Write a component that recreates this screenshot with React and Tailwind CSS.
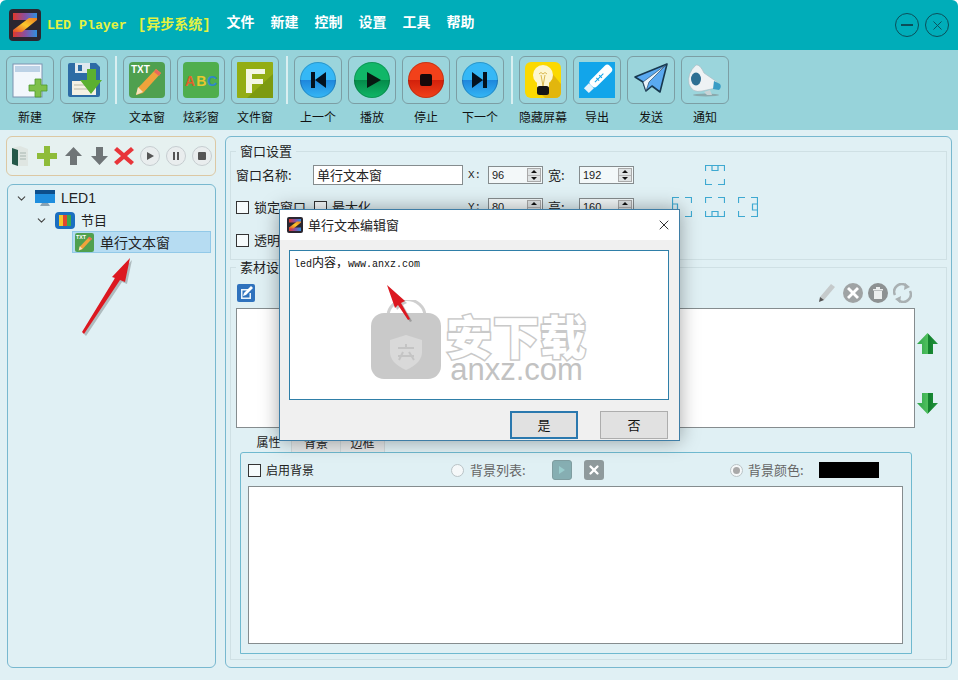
import { X, ChevronDown } from "lucide-react";

const cjk = "font-['Noto_Sans_CJK_SC','Liberation_Sans',sans-serif]";

function Logo({ size }) {
    return (
        <svg width={size} height={size} viewBox="0 0 32 32">
            <defs>
                <linearGradient id={`logoBar${size}`} x1="0" y1="0" x2="1" y2="0">
                    <stop offset="0" stopColor="#e2382a" />
                    <stop offset="0.5" stopColor="#8a4fa0" />
                    <stop offset="1" stopColor="#2f8fe0" />
                </linearGradient>
                <linearGradient id={`logoMid${size}`} x1="0" y1="1" x2="1" y2="0">
                    <stop offset="0" stopColor="#e8452a" />
                    <stop offset="0.5" stopColor="#f8c92c" />
                    <stop offset="1" stopColor="#ee7a22" />
                </linearGradient>
            </defs>
            <rect width="32" height="32" rx="4" fill="#2b2630" />
            <path d="M4 4h24v7H4z" fill={`url(#logoBar${size})`} />
            <path d="M4 21h24v7H4z" fill={`url(#logoBar${size})`} />
            <path d="M20 9h8v2L13 23H4v-2z" fill={`url(#logoMid${size})`} />
        </svg>
    );
}

function NewIcon() {
    return (
        <svg width="36" height="36" viewBox="0 0 36 36">
            <rect x="1" y="2" width="29" height="33" fill="#f2f7fc" stroke="#7c94b0" />
            <rect x="3" y="4" width="25" height="6" fill="#bcd2e6" />
            <path d="M24 18h6v6h6v6h-6v6h-6v-6h-6v-6h6z" fill="#7fc04a" stroke="#4d9a2f" strokeWidth="0.8" transform="translate(-1 -1)" />
        </svg>
    );
}

function SaveIcon() {
    return (
        <svg width="36" height="36" viewBox="0 0 36 36">
            <path d="M2 3q0-2 2-2h26l4 4v28q0 2-2 2H4q-2 0-2-2z" fill="#2d6ca5" />
            <rect x="9" y="1" width="15" height="10" fill="#dfe8ee" />
            <rect x="12" y="3" width="4" height="6" fill="#2d6ca5" />
            <rect x="6" y="19" width="24" height="14" fill="#f4f1e4" />
            <path d="M8 23h16M8 27h16" stroke="#b9b9a8" />
            <path d="M21 7h9v11h6L25 32 14 18h7z" fill="#5bb030" />
        </svg>
    );
}

function TxtIcon({ size = 36 }) {
    return (
        <svg width={size} height={size} viewBox="0 0 36 36">
            <rect width="36" height="36" rx="4" fill="#4fa04f" />
            <text x="2" y="11" fontSize="10" fontWeight="700" fill="#fff" fontFamily="Liberation Sans">TXT</text>
            <path d="M27 7l5 4-18 20-7 2 2-7z" fill="#f0a33c" />
            <path d="M27 7l5 4-2 3-5-4z" fill="#e96a5a" />
            <path d="M9 25l5 5-7 3z" fill="#f7e2bd" />
        </svg>
    );
}

function AbcIcon() {
    return (
        <svg width="36" height="36" viewBox="0 0 36 36">
            <rect width="36" height="36" rx="4" fill="#4fae4d" />
            <text x="2" y="24" fontSize="14" fontWeight="700" letterSpacing="1" fontFamily="Liberation Sans">
                <tspan fill="#e2622a">A</tspan>
                <tspan fill="#e8c72e">B</tspan>
                <tspan fill="#2f86c9">C</tspan>
            </text>
        </svg>
    );
}

function FileIcon() {
    return (
        <svg width="36" height="36" viewBox="0 0 36 36">
            <rect width="36" height="36" rx="1" fill="#93ad14" />
            <path d="M36 12v24H10z" fill="#7d9a10" />
            <path d="M9 7h19v5H15v5h11v5H15v9H9z" fill="#f4f6e4" />
        </svg>
    );
}

function RoundIcon({ id, light, dark, children }) {
    return (
        <svg width="36" height="36" viewBox="0 0 36 36">
            <defs>
                <linearGradient id={id} x1="0" y1="0" x2="0" y2="1">
                    <stop offset="0" stopColor={light} />
                    <stop offset="0.5" stopColor={light} />
                    <stop offset="0.5" stopColor={dark} />
                    <stop offset="1" stopColor={light} />
                </linearGradient>
            </defs>
            <circle cx="18" cy="18" r="18" fill={`url(#${id})`} />
            <circle cx="18" cy="18" r="17.5" fill="none" stroke="#000" strokeOpacity="0.18" />
            {children}
        </svg>
    );
}

function BulbIcon() {
    return (
        <svg width="36" height="36" viewBox="0 0 36 36">
            <rect width="36" height="36" rx="6" fill="#fbd900" />
            <path d="M26 10L36 22v8q0 6-6 6H20L14 30z" fill="#e2b60d" />
            <circle cx="18" cy="13" r="10" fill="#fdf6d0" />
            <rect x="12" y="18" width="12" height="7" fill="#fdf6d0" />
            <path d="M14 12q2-3 4 0q2-3 4 0M16 13l2 11M20 13l-2 11" stroke="#d9b850" fill="none" />
            <rect x="12" y="24" width="12" height="9" rx="2.5" fill="#151515" />
        </svg>
    );
}

function UsbIcon() {
    return (
        <svg width="36" height="36" viewBox="0 0 36 36">
            <rect width="36" height="36" fill="#12a5ea" />
            <g transform="rotate(45 18 18)">
                <rect x="13.5" y="-1" width="9" height="27" rx="3.5" fill="#fff" />
                <rect x="14.5" y="26" width="7" height="7" fill="#e4f3fb" />
                <path d="M18 9v12M16 13h4M16 17h4" stroke="#12a5ea" />
            </g>
        </svg>
    );
}

function SendIcon() {
    return (
        <svg width="36" height="36" viewBox="0 0 36 36">
            <path d="M34 2L2 15l8 5 3 9 6-5 8 6z" fill="#5aa9f0" stroke="#17384f" strokeWidth="1.6" strokeLinejoin="round" />
            <path d="M34 2L10 20l3 9 3-9z" fill="#eaf4fc" stroke="#17384f" strokeWidth="0.6" />
        </svg>
    );
}

function NoticeIcon() {
    return (
        <svg width="36" height="36" viewBox="0 0 36 36">
            <ellipse cx="19" cy="33" rx="13" ry="1.5" fill="#8aa9ad" />
            <path d="M9 3q4-1 8 8l13 9-1 6-14 3Q5 31 2 22 0 11 9 3z" fill="#eef2f4" stroke="#aab7bd" strokeWidth="0.6" />
            <ellipse cx="9" cy="17" rx="5" ry="6.5" fill="#2e6f93" />
            <path d="M27 19l6 3q2 3-1 6l-6-1z" fill="#3a9cc5" />
            <path d="M17 30l3 3h5l-2-5z" fill="#c9d3d6" />
        </svg>
    );
}

const playGlyph = <path d="M13 10l14 8-14 8z" fill="#071a12" />;

const tools = [
    { label: "新建", icon: <NewIcon /> },
    { label: "保存", icon: <SaveIcon /> },
    "sep",
    { label: "文本窗", icon: <TxtIcon /> },
    { label: "炫彩窗", icon: <AbcIcon /> },
    { label: "文件窗", icon: <FileIcon /> },
    "sep",
    {
        label: "上一个",
        icon: (
            <RoundIcon id="roundPrev" light="#35b8f6" dark="#1e86dc">
                <path d="M11 10h4v16h-4zM26 10v16l-11-8z" fill="#04121f" />
            </RoundIcon>
        ),
    },
    {
        label: "播放",
        icon: (
            <RoundIcon id="roundPlay" light="#10b768" dark="#048a4a">
                {playGlyph}
            </RoundIcon>
        ),
    },
    {
        label: "停止",
        icon: (
            <RoundIcon id="roundStop" light="#f2411a" dark="#d2200b">
                <rect x="12" y="12" width="12" height="12" rx="2" fill="#16090a" />
            </RoundIcon>
        ),
    },
    {
        label: "下一个",
        icon: (
            <RoundIcon id="roundNext" light="#35b8f6" dark="#1e86dc">
                <path d="M10 10v16l11-8zM21 10h4v16h-4z" fill="#04121f" />
            </RoundIcon>
        ),
    },
    "sep",
    { label: "隐藏屏幕", icon: <BulbIcon /> },
    { label: "导出", icon: <UsbIcon /> },
    { label: "发送", icon: <SendIcon /> },
    { label: "通知", icon: <NoticeIcon /> },
];

function ToolButton({ label, icon }) {
    return (
        <div className="flex w-[48px] flex-col items-center">
            <div className="flex h-[48px] w-[48px] items-center justify-center rounded-[6px] border border-[#7c9ea4] bg-[#9bd5dc]">
                {icon}
            </div>
            <div className="mt-[4px] h-[18px] whitespace-nowrap text-[12px] leading-[18px] text-[#111]">{label}</div>
        </div>
    );
}

function TreeIconMonitor() {
    return (
        <svg width="20" height="17" viewBox="0 0 20 17">
            <rect x="0" y="0" width="20" height="13" fill="#1f8ede" />
            <rect x="0" y="0" width="20" height="4" fill="#0d4f8c" />
            <path d="M7 13h6l2 3H5z" fill="#8aa3b3" />
        </svg>
    );
}

function TreeIconProgram() {
    return (
        <svg width="20" height="17" viewBox="0 0 20 17">
            <rect width="20" height="17" rx="4" fill="#1b6fc0" />
            <rect x="4" y="3" width="4" height="11" fill="#f4c62c" />
            <rect x="8" y="3" width="4" height="11" fill="#e2462e" />
            <rect x="12" y="3" width="4" height="11" fill="#3aaa4d" />
        </svg>
    );
}

function SmallRound({ children }) {
    return (
        <svg width="20" height="20" viewBox="0 0 20 20">
            <circle cx="10" cy="10" r="9.5" fill="#e9edee" stroke="#c6cdd0" />
            {children}
        </svg>
    );
}

function SideToolbar() {
    return (
        <div className="flex h-[40px] items-center rounded-[6px] border border-[#dcc8a4] bg-[#e6f1f0] pl-[5px]">
            <svg width="16" height="20" viewBox="0 0 16 20" className="mr-[9px]">
                <path d="M0 2l8-2 8 3v17H5l-5-2z" fill="#dfe6e2" />
                <path d="M0 2l6 2v16l-6-2z" fill="#25594a" />
                <path d="M8 7h6M8 10h6M8 13h6" stroke="#a7b6b0" />
            </svg>
            <svg width="20" height="20" viewBox="0 0 20 20" className="mr-[8px]">
                <path d="M7 0h6v7h7v6h-7v7H7v-7H0V7h7z" fill="#8ebc3a" />
            </svg>
            <svg width="17" height="18" viewBox="0 0 17 18" className="mr-[9px]">
                <path d="M8.5 0L17 9h-5v9H5V9H0z" fill="#6f7577" />
            </svg>
            <svg width="17" height="18" viewBox="0 0 17 18" className="mr-[6px]">
                <path d="M8.5 18L17 9h-5V0H5v9H0z" fill="#6f7577" />
            </svg>
            <svg width="20" height="20" viewBox="0 0 20 20" className="mr-[6px]">
                <path d="M3 1l7 6 7-6 3 3-7 6 7 6-3 3-7-6-7 6-3-3 7-6-7-6z" fill="#e8353a" />
            </svg>
            <div className="mr-[6px]">
                <SmallRound>
                    <path d="M7 6l7 4-7 4z" fill="#555" />
                </SmallRound>
            </div>
            <div className="mr-[6px]">
                <SmallRound>
                    <path d="M7 6h2v8H7zM11 6h2v8h-2z" fill="#555" />
                </SmallRound>
            </div>
            <SmallRound>
                <rect x="6" y="6" width="8" height="8" rx="1" fill="#555" />
            </SmallRound>
        </div>
    );
}

function Tree() {
    return (
        <div className="mt-[8px] ml-[1px] flex-1 rounded-[6px] border border-[#78b8cf] bg-[#e0f0f4] pt-[2px] text-[#222]">
            <div className="flex h-[22px] items-center pl-[7px]">
                <ChevronDown size={13} strokeWidth={2} className="text-[#444]" />
                <div className="ml-[7px]">
                    <TreeIconMonitor />
                </div>
                <span className="ml-[6px] text-[14px] font-['Liberation_Sans',sans-serif]">LED1</span>
            </div>
            <div className="flex h-[22px] items-center pl-[27px]">
                <ChevronDown size={13} strokeWidth={2} className="text-[#444]" />
                <div className="ml-[7px]">
                    <TreeIconProgram />
                </div>
                <span className="ml-[6px] text-[13px]">节目</span>
            </div>
            <div className="ml-[64px] mr-[4px] flex h-[22px] items-center border border-[#92c9e8] bg-[#b6dcf2] pl-[2px]">
                <TxtIcon size={19} />
                <span className="ml-[6px] text-[14px]">单行文本窗</span>
            </div>
        </div>
    );
}

function Spin({ value }) {
    return (
        <div className="flex h-[18px] w-[55px] items-center justify-between border border-[#858c8e] bg-[#f3f8f9] pl-[3px] pr-[1px]">
            <span className="text-[11px] leading-none text-[#222] font-['Liberation_Sans',sans-serif]">{value}</span>
            <div className="flex h-[14px] w-[14px] flex-col border border-[#a9a9a9] bg-[#dfe3e4]">
                <div className="flex flex-1 items-center justify-center border-b border-[#b5b5b5]">
                    <div className="h-0 w-0 border-x-[3px] border-b-[3px] border-x-transparent border-b-[#111]" />
                </div>
                <div className="flex flex-1 items-center justify-center">
                    <div className="h-0 w-0 border-x-[3px] border-t-[3px] border-x-transparent border-t-[#111]" />
                </div>
            </div>
        </div>
    );
}

function Check({ label, className = "", textClass = "text-[13px]" }) {
    return (
        <div className={`flex items-center ${className}`}>
            <div className="h-[13px] w-[13px] border border-[#333] bg-[#f6fbfc]" />
            <span className={`ml-[5px] whitespace-nowrap text-[#222] ${textClass}`}>{label}</span>
        </div>
    );
}

function AlignIcon({ block }) {
    return (
        <svg width="20" height="20" viewBox="0 0 20 20" fill="none" stroke="#3ea9d1" strokeWidth="1.2">
            <path d="M0.5 6V0.5H7M13 0.5H19.5V6M19.5 14V19.5H13M7 19.5H0.5V14" />
            {block === "top" && <path d="M7 0.5V5.5H13V0.5M7 0.5H13" />}
            {block === "bottom" && <path d="M7 19.5V14.5H13V19.5M7 19.5H13" />}
            {block === "left" && <path d="M0.5 7H5.5V13H0.5M0.5 6V14" />}
            {block === "right" && <path d="M19.5 7H14.5V13H19.5M19.5 6V14" />}
        </svg>
    );
}

function Legend({ children }) {
    return <legend className="ml-[5px] h-[16px] px-[4px] text-[13px] leading-[16px] text-[#222]">{children}</legend>;
}

function WindowSettings() {
    return (
        <fieldset className="h-[117px] border border-[#cfe0e4]">
            <Legend>窗口设置</Legend>
            <div className="mt-[6px] flex h-[20px] items-center pl-[5px]">
                <span className="w-[77px] text-[13px] text-[#222]">窗口名称:</span>
                <div className="flex h-[20px] w-[150px] items-center border border-[#858c8e] bg-white pl-[3px] text-[13px] text-[#222]">
                    单行文本窗
                </div>
                <span className="ml-[5px] w-[20px] text-[11px] text-[#222] font-['Liberation_Mono',monospace]">X:</span>
                <Spin value="96" />
                <span className="ml-[5px] w-[31px] text-[13px] text-[#222]">宽:</span>
                <Spin value="192" />
                <div className="ml-[71px]">
                    <AlignIcon block="top" />
                </div>
            </div>
            <div className="mt-[12px] flex h-[20px] items-center pl-[5px]">
                <Check label="锁定窗口" className="w-[78px]" />
                <Check label="最大化" className="w-[154px]" />
                <span className="w-[20px] text-[11px] text-[#222] font-['Liberation_Mono',monospace]">Y:</span>
                <Spin value="80" />
                <span className="ml-[5px] w-[31px] text-[13px] text-[#222]">高:</span>
                <Spin value="160" />
                <div className="ml-[38px] flex gap-[13px]">
                    <AlignIcon block="left" />
                    <AlignIcon block="bottom" />
                    <AlignIcon block="right" />
                </div>
            </div>
            <div className="mt-[13px] flex h-[20px] items-center pl-[5px]">
                <Check label="透明" />
            </div>
        </fieldset>
    );
}

function MaterialActions() {
    return (
        <div className="mt-[8px] flex h-[20px] items-center justify-between pl-[6px] pr-[34px]">
            <svg width="18" height="18" viewBox="0 0 18 18">
                <rect width="18" height="18" rx="2" fill="#2f72bd" />
                <path d="M4 5h7v1.5H5.5v7h7V9H14v6H4z" fill="#eaf3fb" />
                <path d="M14 2l2 2-7 7-3 1 1-3z" fill="#fff" />
            </svg>
            <div className="flex items-center gap-[5px]">
                <svg width="18" height="20" viewBox="0 0 18 20" className="mr-[2px]">
                    <path d="M13 1l4 3L6 17l-4 1 0-4z" fill="#c5cacb" />
                    <path d="M2 14l4 3-5 2z" fill="#555" />
                </svg>
                <svg width="20" height="20" viewBox="0 0 20 20">
                    <circle cx="10" cy="10" r="10" fill="#9fa3a4" />
                    <path d="M6 4l4 4 4-4 2 2-4 4 4 4-2 2-4-4-4 4-2-2 4-4-4-4z" fill="#fff" />
                </svg>
                <svg width="20" height="20" viewBox="0 0 20 20">
                    <circle cx="10" cy="10" r="10" fill="#8d9192" />
                    <path d="M5 6h10v1.5H5zM8 4h4v2H8zM6 8h8v8H6z" fill="#eceeee" />
                </svg>
                <svg width="19" height="20" viewBox="0 0 19 20">
                    <path d="M2 12A7.5 7.5 0 0 1 13 2.5" fill="none" stroke="#a9b0b2" strokeWidth="2.5" />
                    <path d="M17 8A7.5 7.5 0 0 1 6 17.5" fill="none" stroke="#a9b0b2" strokeWidth="2.5" />
                    <path d="M12 0l5 4-6 3zM7 20l-5-4 6-3z" fill="#a9b0b2" />
                </svg>
            </div>
        </div>
    );
}

function GreenArrow({ id, down }) {
    return (
        <svg width="21" height="21" viewBox="0 0 21 21">
            <defs>
                <linearGradient id={id} x1="0" y1="0" x2="1" y2="0">
                    <stop offset="0" stopColor="#2fa44a" />
                    <stop offset="0.5" stopColor="#4fc05e" />
                    <stop offset="0.55" stopColor="#117f2c" />
                    <stop offset="1" stopColor="#25963f" />
                </linearGradient>
            </defs>
            <path d={down ? "M5 0h11v10h5L10.5 21 0 10h5z" : "M10.5 0L21 11h-5v10H5V11H0z"} fill={`url(#${id})`} />
        </svg>
    );
}

function BackgroundTab() {
    return (
        <div className="ml-[9px] flex h-[202px] w-[672px] flex-col rounded-t-[3px] border border-[#6fb9cf] px-[7px]">
            <div className="mt-[7px] flex h-[20px] items-center text-[13px] text-[#666]">
                <Check label="启用背景" className="w-[203px]" textClass="text-[12px]" />
                <div className="h-[13px] w-[13px] rounded-full border border-[#b9c3c6] bg-[#f5f8f9]" />
                <span className="ml-[6px] w-[82px]">背景列表:</span>
                <div className="flex h-[20px] w-[20px] items-center justify-center rounded-[3px] border border-[#7f9da0] bg-[#86aeb2]">
                    <div className="h-0 w-0 border-y-[4px] border-l-[6px] border-y-transparent border-l-[#9cc]" />
                </div>
                <div className="ml-[12px] flex h-[20px] w-[20px] items-center justify-center rounded-[3px] bg-[#8f9a9c]">
                    <X size={14} strokeWidth={4} className="text-white" />
                </div>
                <div className="ml-[126px] flex h-[13px] w-[13px] items-center justify-center rounded-full border border-[#b9c3c6] bg-[#f5f8f9]">
                    <div className="h-[7px] w-[7px] rounded-full bg-[#a9a9a9]" />
                </div>
                <span className="ml-[5px] w-[71px]">背景颜色:</span>
                <div className="h-[16px] w-[60px] bg-black" />
            </div>
            <div className="mt-[6px] h-[158px] w-[655px] border border-[#858c8e] bg-white" />
        </div>
    );
}

function MaterialSettings() {
    return (
        <fieldset className="-mt-px h-[401px] border border-[#cfe0e4]">
            <Legend>素材设置</Legend>
            <MaterialActions />
            <div className="mt-[5px] flex pl-[5px]">
                <div className="h-[120px] w-[679px] border border-[#858c8e] bg-white" />
                <div className="ml-[2px] flex flex-col pt-[25px]">
                    <GreenArrow id="arrowUp" />
                    <div className="mt-[39px]">
                        <GreenArrow id="arrowDown" down />
                    </div>
                </div>
            </div>
            <div className="ml-[15px] mt-[5px] flex h-[19px] text-[12px] leading-[17px] text-[#222]">
                <div className="w-[45px] text-center">属性</div>
                <div className="w-[50px] border border-b-0 border-[#cfd8da] bg-[#e4e7e8] text-center">背景</div>
                <div className="w-[44px] border border-b-0 border-l-0 border-[#cfd8da] bg-[#e4e7e8] text-center">边框</div>
            </div>
            <BackgroundTab />
        </fieldset>
    );
}

function Dialog() {
    return (
        <div className="absolute left-[279px] top-[209px] flex h-[232px] w-[401px] flex-col border border-[#3f7ea6] bg-[#f0f0f0] shadow-[0_0_18px_rgba(0,0,0,0.35)]">
            <div className="flex h-[30px] shrink-0 items-center bg-white pl-[7px] pr-[7px]">
                <Logo size={16} />
                <span className="ml-[5px] flex-1 text-[13px] text-[#222]">单行文本编辑窗</span>
                <X size={16} strokeWidth={1.3} className="text-[#111]" />
            </div>
            <div className="ml-[9px] mr-[10px] mt-[10px] h-[150px] border border-[#2f7fa8] bg-white pl-[4px] pt-[1px] leading-[16px] text-[#111]">
                <span className="text-[10px] font-['Liberation_Mono',monospace]">led</span>
                <span className="text-[12px]">内容，</span>
                <span className="text-[10px] font-['Liberation_Mono',monospace]">www.anxz.com</span>
            </div>
            <div className="mr-[11px] mt-[11px] flex justify-end gap-[22px] text-[13px] text-[#111]">
                <div className="flex h-[28px] w-[68px] items-center justify-center border-2 border-[#2a78ae] bg-[#e1e1e1]">是</div>
                <div className="flex h-[28px] w-[68px] items-center justify-center border border-[#adadad] bg-[#e1e1e1]">否</div>
            </div>
            <Watermark />
        </div>
    );
}

function Watermark() {
    return (
        <div className="pointer-events-none absolute left-[91px] top-[90px] flex">
            <svg width="71" height="79" viewBox="0 0 71 79">
                <path d="M17 16a18 16 0 0 1 37 0" fill="none" stroke="#cfcfcf" strokeWidth="3" />
                <rect x="0" y="13" width="70" height="66" rx="13" fill="#c9c9c9" />
                <path d="M35 35l16 5v12q0 11-16 18-16-7-16-18V40z" fill="#d9d9d9" />
                <path d="M35 44v4M27 48h16M32 52l-4 8M38 52l5 8M27 56h16" stroke="#c4c4c4" strokeWidth="2" fill="none" />
            </svg>
            <div className="ml-[4px] flex flex-col items-center">
                <span className="mt-[9px] text-[46px] font-black leading-[50px] tracking-[1px] text-white [-webkit-text-stroke:3px_#c9c9c9] [paint-order:stroke_fill]">安下载</span>
                <span className="-mt-[3px] text-[31px] leading-[28px] text-[#c2c2c2] font-['Liberation_Sans',sans-serif]">anxz.com</span>
            </div>
        </div>
    );
}

function RedArrow({ className, width, height, viewBox, points }) {
    return (
        <svg className={className} width={width} height={height} viewBox={viewBox}>
            <polygon points={points} fill="#000" opacity="0.22" transform="translate(2 2)" />
            <polygon points={points} fill="#dc1820" />
        </svg>
    );
}

export default function App() {
    return (
        <div className={`relative flex h-[680px] w-[958px] flex-col overflow-hidden bg-white ${cjk}`}>
            <header className="flex h-[50px] shrink-0 items-center rounded-t-[6px] bg-[#00adb9] pl-[9px] pr-[9px]">
                <Logo size={32} />
                <span className="ml-[6px] mt-[1px] flex items-center whitespace-nowrap text-[13.3px] font-bold text-[#e4f241] font-['Liberation_Mono','Noto_Sans_CJK_SC',monospace]">
                    LED Player
                    <span className="ml-[11px] text-[14px]">[异步系统]</span>
                </span>
                <nav className="mb-[8px] ml-[16px] flex gap-[16px] text-[14px] font-bold text-white">
                    <span>文件</span>
                    <span>新建</span>
                    <span>控制</span>
                    <span>设置</span>
                    <span>工具</span>
                    <span>帮助</span>
                </nav>
                <div className="ml-auto flex items-center gap-[6px]">
                    <div className="flex h-[24px] w-[24px] items-center justify-center rounded-full border border-[#0c4f5a]">
                        <div className="h-[2px] w-[12px] bg-[#0c4f5a]" />
                    </div>
                    <div className="flex h-[24px] w-[24px] items-center justify-center rounded-full border border-[#0c4f5a]">
                        <X size={15} strokeWidth={1.5} className="text-[#0c4f5a]" />
                    </div>
                </div>
            </header>

            <div className="flex h-[80px] shrink-0 items-start gap-[6px] bg-[#97d3da] pl-[6px] pt-[6px]">
                {tools.map((tool, index) =>
                    tool === "sep" ? (
                        <div key={index} className="w-[3px] pl-px">
                            <div className="h-[48px] w-[2px] bg-[#d9eff1]" />
                        </div>
                    ) : (
                        <ToolButton key={tool.label} label={tool.label} icon={tool.icon} />
                    )
                )}
            </div>

            <main className="flex flex-1 bg-[#e0f0f4] pb-[12px] pl-[6px] pt-[6px]">
                <aside className="flex w-[210px] flex-col">
                    <SideToolbar />
                    <Tree />
                </aside>
                <section className="ml-[9px] w-[727px] rounded-[6px] border border-[#78b8cf] px-[4px] pt-[6px]">
                    <WindowSettings />
                    <MaterialSettings />
                </section>
            </main>

            <RedArrow
                className="absolute left-[78px] top-[256px]"
                width="56"
                height="82"
                viewBox="0 0 56 82"
                points="52,2 47,26 42,24 6,78 4,76 37,22 34,21"
            />
            <Dialog />
            <RedArrow
                className="absolute left-[385px] top-[283px]"
                width="30"
                height="40"
                viewBox="0 0 30 40"
                points="2,2 20,18 16,20 25,36 23,37 13,22 10,25"
            />
        </div>
    );
}
